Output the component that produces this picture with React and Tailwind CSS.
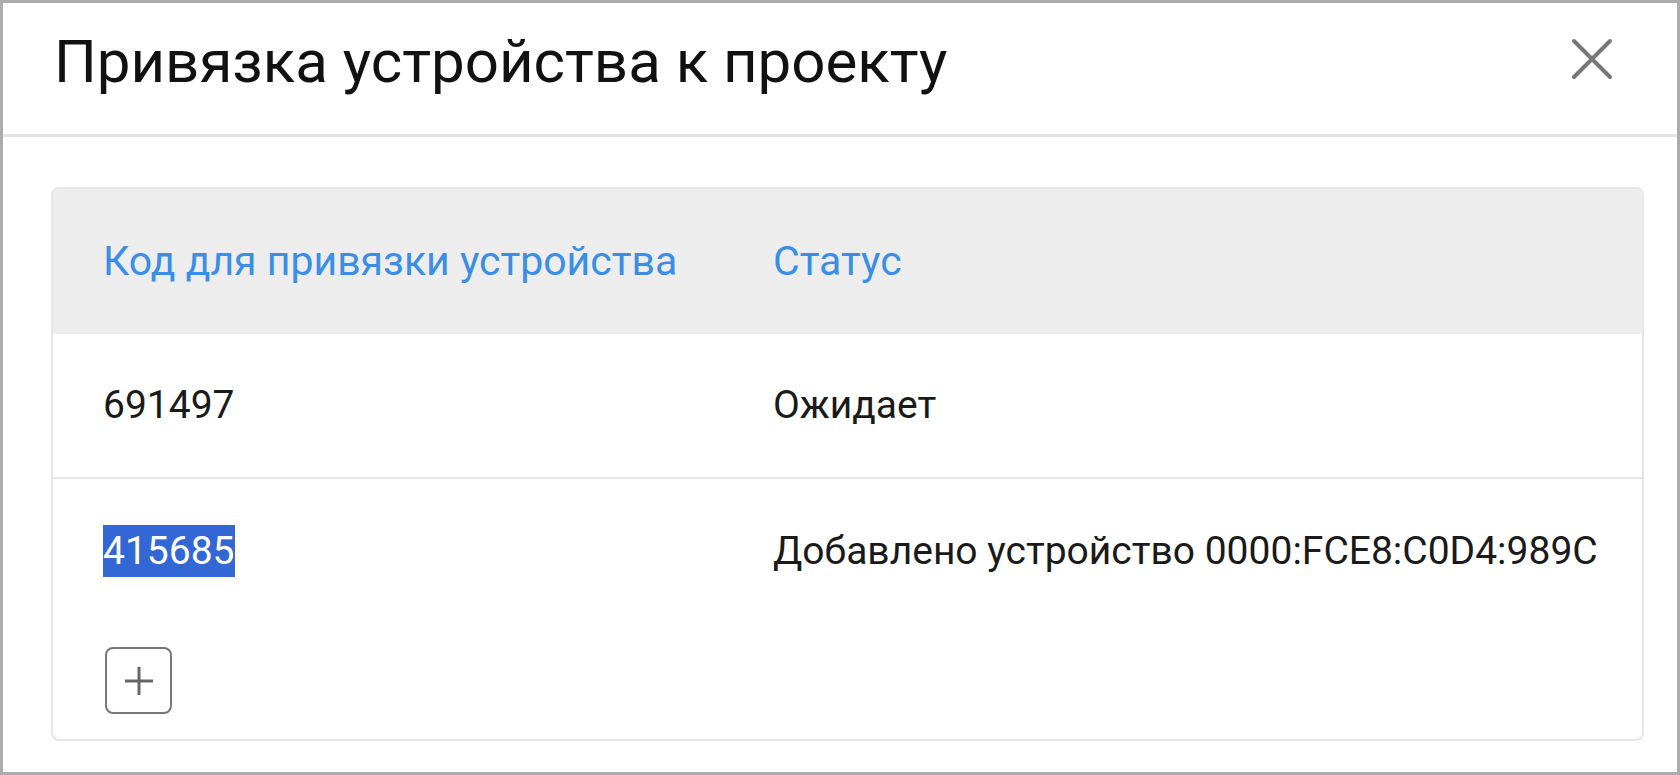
import React from "react";

const rows = [
    { code: "691497", status: "Ожидает" },
    { code: "415685", status: "Добавлено устройство 0000:FCE8:C0D4:989C", selected: true },
];

function CloseIcon() {
    return (
        <svg width="42" height="42" viewBox="0 0 42 42" fill="none" stroke="#777" strokeWidth="4" strokeLinecap="round">
            <path d="M3 3 L39 39 M39 3 L3 39" />
        </svg>
    );
}

function PlusIcon() {
    return (
        <svg width="30" height="30" viewBox="0 0 30 30" fill="none" stroke="#666" strokeWidth="3">
            <path d="M15 1 V29 M1 15 H29" />
        </svg>
    );
}

export default function App() {
    return (
        <div className="h-screen w-screen bg-white border-[3px] border-[#acacac] flex flex-col overflow-hidden"
            style={{ fontFamily: "Roboto, 'Liberation Sans', sans-serif" }}>
            {/* cabecera del dialogo */}
            <div className="h-[134px] shrink-0 flex items-center justify-between pl-[51px] pr-[64px] pb-[14px] border-b-[3px] border-[#e3e3e3]">
                <h1 className="text-[60px] leading-none text-[#111]">Привязка устройства к проекту</h1>
                <button className="flex items-center justify-center -mt-[6px]"><CloseIcon /></button>
            </div>

            {/* tabla */}
            <div className="pl-[48px] pr-[33px] pt-[50px]">
                <div className="rounded-lg border-2 border-[#e6e6e6] overflow-hidden">
                    <div className="grid grid-cols-[670px_1fr] h-[145px] items-center bg-[#ededed] text-[#3a8ee6] text-[41px] pl-[50px] pr-[20px]">
                        <div>Код для привязки устройства</div>
                        <div>Статус</div>
                    </div>
                    {rows.map((r, i) => (
                        <div key={r.code}
                            className={"grid grid-cols-[670px_1fr] h-[145px] items-center text-[#1a1a1a] text-[39px] pl-[50px] pr-[20px] whitespace-nowrap " + (i === 0 ? "border-b-2 border-[#e6e6e6]" : "")}>
                            <div>
                                {r.selected
                                    ? <span className="bg-[#3367d6] text-white py-[3px]">{r.code}</span>
                                    : r.code}
                            </div>
                            <div>{r.status}</div>
                        </div>
                    ))}
                    <div className="pl-[52px] pt-[23px] pb-[25px]">
                        <button className="w-[67px] h-[67px] rounded-lg border-2 border-[#777] flex items-center justify-center">
                            <PlusIcon />
                        </button>
                    </div>
                </div>
            </div>
        </div>
    );
}
